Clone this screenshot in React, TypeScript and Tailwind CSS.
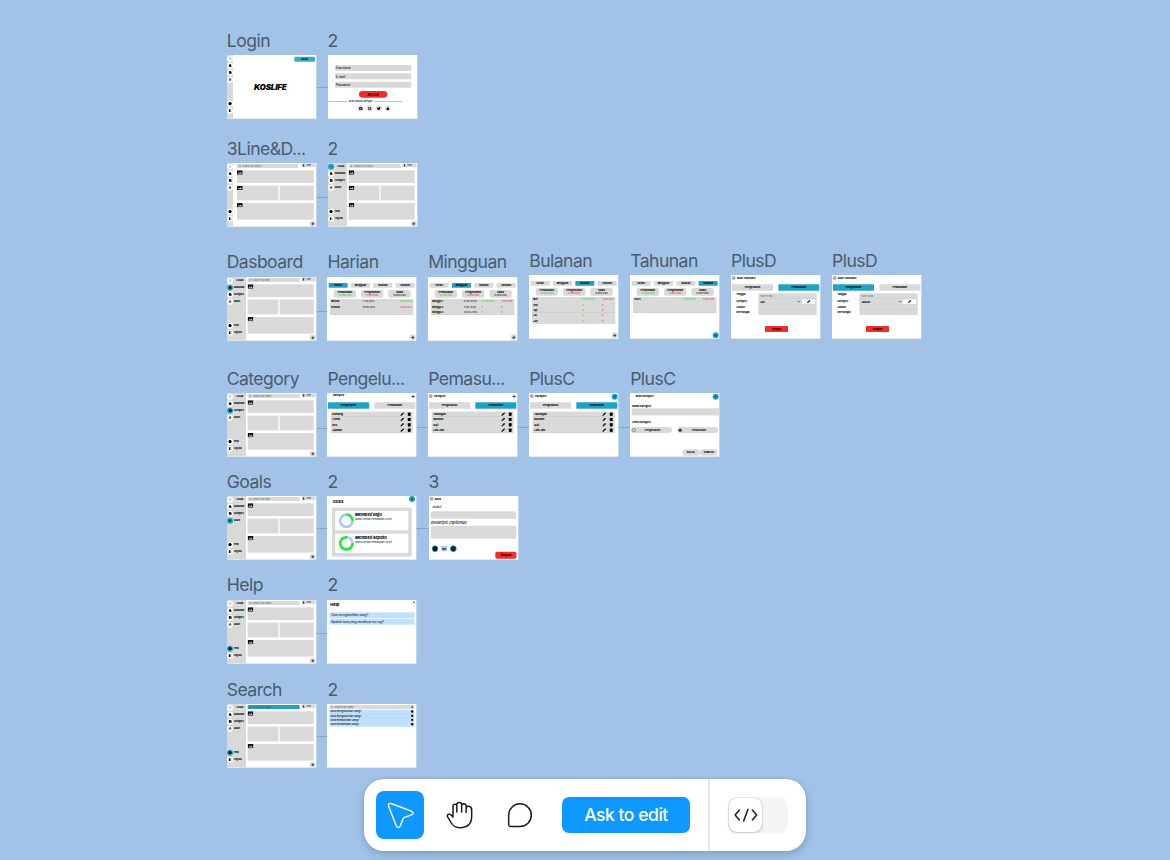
import type { ReactNode } from "react";
import clsx from "clsx";
import {
  ArrowLeft, Check, ChevronDown, Goal, House, Menu, Minus,
  Pencil, Plus, Search, Trash2, User, Wallet, X, CircleHelp,
} from "lucide-react";
import { FaApple, FaFacebook, FaGoogle, FaTwitter } from "react-icons/fa";

/* ---------- canvas primitives ---------- */

// Artboards are authored at 3x and shown at one third of their size.
function Artboard({ at, title, high = false, children }: { at: string; title: string; high?: boolean; children: ReactNode }) {
  return (
    <section className={clsx("absolute flex w-[90px] flex-col gap-[3px]", at)}>
      <h2 className={clsx("h-6 text-[17.6px] leading-6 tracking-[-0.55px] whitespace-nowrap text-[#4a5c70]", !high && "pt-px")}>{title}</h2>
      <div className="h-[64px]">
        <div className="flex h-[191px] w-[268px] origin-top-left scale-[0.33333] flex-col overflow-hidden bg-white text-[8px] leading-none text-black">
          {children}
        </div>
      </div>
    </section>
  );
}

function Link({ at }: { at: string }) {
  return <div className={clsx("absolute h-px bg-[#84a2c5]", at)} />;
}

/* ---------- shared pieces ---------- */

function AddButton({ teal = false }: { teal?: boolean }) {
  return (
    <div className={clsx("flex size-[18px] shrink-0 items-center justify-center rounded-full", teal ? "bg-[#22a2c2]" : "bg-[#d9d9d9]")}>
      <Plus size={11} strokeWidth={4} className={teal ? "text-[#0b3c4a]" : "text-black"} />
    </div>
  );
}

function Back() {
  return (
    <div className="flex size-[10px] shrink-0 items-center justify-center rounded-full border border-black">
      <ArrowLeft size={7} strokeWidth={3} />
    </div>
  );
}

function ExitIcon() {
  return (
    <svg viewBox="0 0 10 10" className="size-[10px]">
      <rect x="1.500" y="1" width="4.500" height="8" fill="black" />
      <path d="M6 1.500 H8.500 V8.500 H6" fill="none" stroke="black" strokeWidth="0.8" />
    </svg>
  );
}

function PictureIcon() {
  return (
    <svg viewBox="0 0 17 13" className="h-[13px] w-[17px]">
      <rect width="17" height="13" fill="black" />
      <path d="M2 10.500 L6 6 L8.500 8.500 L11.500 5 L15.500 10.500 Z" fill="#d9d9d9" />
      <path d="M2 3 H15" stroke="#777" strokeWidth="1" />
    </svg>
  );
}

function NavItem({ icon, label, active, first, wide }: { icon: ReactNode; label: string; active: boolean; first?: boolean; wide: boolean }) {
  return (
    <div className="flex h-[21px] items-center gap-[2px]">
      <div className={clsx("flex size-[18px] shrink-0 items-center justify-center rounded-full", active ? "bg-[#22a2c2]" : "bg-white")}>{icon}</div>
      {wide && <span className={clsx("text-[7px] font-extrabold tracking-[-0.2px] whitespace-nowrap", first && "pl-2")}>{label}</span>}
    </div>
  );
}

function Sidebar({ wide, active }: { wide: boolean; active?: string }) {
  const items: [string, ReactNode][] = [
    ["LOGIN", <Menu size={9} strokeWidth={2} className="text-gray-600" />],
    ["Dasboard", <House size={9} strokeWidth={4} fill="black" />],
    ["Category", <Wallet size={9} strokeWidth={4} fill="black" />],
    ["Goals", <Goal size={10} strokeWidth={2.5} />],
  ];
  return (
    <nav className={clsx("flex shrink-0 flex-col bg-[#d9d9d9]", wide ? "w-[57px]" : "w-[18px]")}>
      {items.map(([label, icon], i) => (
        <NavItem key={label} label={label} icon={icon} wide={wide} first={i === 0} active={active === label} />
      ))}
      <div className="h-[51px]" />
      <NavItem label="Help" icon={<CircleHelp size={10} strokeWidth={5} fill="black" />} wide={wide} active={active === "Help"} />
      <NavItem label="Log out" icon={<ExitIcon />} wide={wide} active={false} />
    </nav>
  );
}

function Block({ size, picture = false }: { size: string; picture?: boolean }) {
  return <div className={clsx("bg-[#d9d9d9]", size)}>{picture && <PictureIcon />}</div>;
}

function Dashboard({ wide = true, active, tealSearch = false, line = false, hint = "Search by date" }: { wide?: boolean; active?: string; tealSearch?: boolean; line?: boolean; hint?: string }) {
  return (
    <div className="flex flex-1">
      <Sidebar wide={wide} active={active} />
      <main className={clsx("flex flex-1 flex-col pr-[8px]", wide ? "pl-[5px]" : "pl-[12px]")}>
        <div className="flex h-[22px] justify-between">
          <div className={clsx("mt-[3px] flex h-[12px] items-center gap-1 rounded-[2px] px-1 text-[7px] text-gray-600 italic", tealSearch ? "bg-[#22a2c2]" : "bg-[#d9d9d9]", wide ? "w-[156px]" : "w-[184px]")}>
            <Search size={8} strokeWidth={2} />
            {hint}
          </div>
          <div className="mt-px -mr-[6px] flex h-[12px] w-[43px] items-center gap-[5px] rounded-[2px] bg-[#d9d9d9] px-[3px] text-[6px]">
            <User size={7} strokeWidth={5} fill="black" />
            User
          </div>
        </div>
        <Block size="h-[38px]" picture />
        <div className="mt-[8px] flex gap-[4px]">
          <Block size={wide ? "h-[44px] w-[92px]" : "h-[44px] w-[124px]"} picture={line} />
          <Block size="h-[44px] flex-1" />
        </div>
        <Block size="mt-[8px] h-[50px]" picture />
        <div className="-mr-[6px] mt-[3px] flex justify-end">
          <AddButton />
        </div>
      </main>
    </div>
  );
}

const TABS = ["Harian", "Mingguan", "Bulanan", "Tahunan"];
const SUMS = [
  ["Pemasukan", "10.000.000", "text-[#21d42b]"],
  ["Pengeluaran", "4.000.000", "text-[#f02d2d]"],
  ["Saldo", "6.000.000", "text-black"],
];

type Entry = { name?: string; date?: string; income?: string; spend?: string; gain?: string };

function Report({ tab, rows, teal = false }: { tab: string; rows: Entry[]; teal?: boolean }) {
  return (
    <>
      <div className="mt-[18px] flex justify-between px-[5px]">
        {TABS.map((t) => (
          <div key={t} className={clsx("flex h-[14px] w-[57px] items-center justify-center rounded-[1px] text-[7px] font-extrabold", t === tab ? "bg-[#22a2c2]" : "bg-[#d9d9d9]")}>{t}</div>
        ))}
      </div>
      <div className="mt-[7px] flex justify-between pr-[17px] pl-[20px]">
        {SUMS.map(([name, value, color]) => (
          <div key={name} className="flex h-[23px] w-[67px] flex-col items-center justify-center gap-[1px] rounded-[6px] bg-[#d9d9d9] text-[7.5px]">
            <span className="font-extrabold">{name}</span>
            <span className={color}>{value}</span>
          </div>
        ))}
      </div>
      <div className="mt-[4px] mr-[9px] ml-[9px] flex flex-col">
        {rows.map((r, i) => (
          <div key={i} className="flex h-[16px] items-center border-b border-[#c3c3c3] bg-[#d9d9d9] pl-1 text-[7px] whitespace-nowrap">
            <span className="w-[94px] font-extrabold">{r.name}</span>
            <span className="w-[53px]">{r.date}</span>
            <span className="w-[59px] text-[#21d42b]">{r.income}</span>
            <span className={r.gain ? "text-[#21d42b]" : "text-[#f02d2d]"}>{r.gain ?? r.spend}</span>
          </div>
        ))}
      </div>
      <div className="mt-auto flex justify-end pr-[2px] pb-[1px]">
        <AddButton teal={teal} />
      </div>
    </>
  );
}

function TypeTabs({ active }: { active: 0 | 1 }) {
  return (
    <div className="flex justify-between px-[3px]">
      {["Pengeluaran", "Pemasukan"].map((t, i) => (
        <div key={t} className={clsx("flex h-[19px] w-[123px] items-center justify-center rounded-[1px] text-[7.5px] font-extrabold", i === active ? "bg-[#22a2c2]" : "bg-[#d9d9d9]")}>{t}</div>
      ))}
    </div>
  );
}

function NewTransaction({ active, category }: { active: 0 | 1; category: string }) {
  return (
    <>
      <div className="flex h-[28px] items-start gap-[5px] pt-[4px] pl-[3px]">
        <Back />
        <span className="pt-px text-[7.5px] font-extrabold">Buat Transaksi</span>
      </div>
      <TypeTabs active={active} />
      <div className="mt-[8px] flex pr-[11px] pl-[16px]">
        <div className="flex w-[66px] flex-col text-[7px] font-extrabold">
          <span className="h-[21px]">Tanggal</span>
          <span className="h-[16px]">Category</span>
          <span className="h-[16px]">Jumlah</span>
          <span className="h-[12px]">Keterangan</span>
        </div>
        <div className="flex flex-1 flex-col bg-[#d9d9d9] text-[7px]">
          <div className="flex h-[17px] items-center border-b border-[#c6c6c6] pl-[6px] text-gray-700">10.07.2.PM</div>
          <div className="flex h-[16px] items-center pl-[6px]">
            <span className="font-bold">{category}</span>
            <ChevronDown size={12} strokeWidth={3} className="mr-[3px] ml-auto" />
            <div className="mr-[5px] flex h-[15px] w-[39px] items-center justify-center bg-white">
              <Pencil size={10} strokeWidth={3} fill="black" />
            </div>
          </div>
          <div className="h-[16px] border-y border-[#c6c6c6]" />
          <div className="h-[16px]" />
        </div>
      </div>
      <div className="mt-[33px] ml-[102px] flex h-[18px] w-[69px] items-center justify-center rounded-[2px] bg-[#f02d2d] text-[7.5px] font-extrabold">Simpan</div>
    </>
  );
}

function CategoryList({ active, names, back = false, teal = false }: { active: 0 | 1; names: string[]; back?: boolean; teal?: boolean }) {
  return (
    <>
      <div className="flex h-[28px] items-start justify-between pr-[2px] pl-[3px]">
        <div className={clsx("flex items-center gap-[5px] pt-[4px]", !back && "pl-[14px]")}>
          {back && <Back />}
          <span className="text-[7.5px] font-extrabold italic">Category</span>
        </div>
        <div className="pt-[2px]">
          {teal ? <AddButton teal /> : <Plus size={13} strokeWidth={3.5} className="mt-[2px] mr-[1px]" />}
        </div>
      </div>
      <TypeTabs active={active} />
      <div className="mx-[11px] mt-[9px] flex flex-col">
        {names.map((n) => (
          <div key={n} className="flex h-[16px] items-center border-b border-[#c3c3c3] bg-[#d9d9d9] pr-[5px] pl-[5px] text-[7.5px] font-extrabold">
            {n}
            <Pencil size={11} strokeWidth={3} fill="black" className="mr-[10px] ml-auto" />
            <Trash2 size={11} strokeWidth={4} fill="black" />
          </div>
        ))}
      </div>
    </>
  );
}

function NewCategory() {
  return (
    <>
      <div className="flex h-[35px] justify-between pt-[2px] pr-[2px] pl-[17px]">
        <span className="pt-[3px] text-[7.5px] font-extrabold italic">Buat Category</span>
        <AddButton teal />
      </div>
      <span className="h-[11px] pl-[6px] text-[7.5px] font-extrabold">Nama Category</span>
      <div className="ml-[5px] h-[21px] bg-[#d9d9d9]" />
      <span className="mt-[17px] h-[18px] pl-[6px] text-[7.5px] font-extrabold">Jenis Category</span>
      <div className="flex justify-between px-[3px]">
        {["Pengeluaran", "Pemasukan"].map((t, i) => (
          <div key={t} className="flex h-[18px] w-[123px] items-center rounded-full bg-[#d9d9d9] pl-[3px] text-[7.5px] font-bold">
            <div className={clsx("size-[11px] rounded-full", i === 1 ? "border-2 border-gray-500 bg-gray-800" : "border border-black")} />
            <span className="flex-1 pr-2 text-center">{t}</span>
          </div>
        ))}
      </div>
      <div className="mt-[49px] mr-[5px] flex justify-end text-[7.5px] font-extrabold">
        <div className="flex h-[19px] w-[53px] items-center justify-center rounded-full bg-[#d9d9d9]">BATAL</div>
        <div className="flex h-[19px] w-[53px] items-center justify-center rounded-full bg-[#d9d9d9]">SIMPAN</div>
      </div>
    </>
  );
}

function GoalCard({ title, sub, done }: { title: string; sub: string; done: number }) {
  const c = 2 * Math.PI * 18.5;
  return (
    <div className="flex h-[58px] bg-white pl-[10px]">
      <svg viewBox="0 0 46 46" className="mt-[6px] size-[46px] shrink-0 -rotate-90">
        <circle cx="23" cy="23" r="18.5" fill="none" stroke="#9dccf8" strokeWidth="7.5" />
        <circle cx="23" cy="23" r="18.5" fill="none" stroke="#16f02c" strokeWidth="7.5" strokeDasharray={`${c * done} ${c}`} transform={done > 0.5 ? "rotate(90 23 23)" : undefined} />
      </svg>
      <div className="flex flex-col gap-[4px] pt-[5px] pl-[3px] whitespace-nowrap italic">
        <span className="text-[12px] font-extrabold">{title}</span>
        <span className="text-[7.2px]">{sub}</span>
      </div>
    </div>
  );
}

/* ---------- toolbar ---------- */

function Toolbar() {
  return (
    <div className="absolute top-[779px] left-[364px] flex h-[72px] w-[442px] items-center rounded-[20px] bg-white pl-3 shadow-[0_3px_9px_rgba(20,40,80,0.24),0_0_2px_rgba(20,40,80,0.16)]">
      <button className="size-12 rounded-lg bg-[#0d99ff]">
        <svg viewBox="0 0 144 144" className="size-12" fill="none" stroke="white" strokeWidth="4.2" strokeLinejoin="round">
          <path d="M45 37.5 L106 60.5 Q116 66 106.5 71.5 L86 79 Q82 80.500 80.500 84.500 L73 104.500 Q67 115 60.500 104.500 L38 45.500 Q36 35.500 45 37.500 Z" />
        </svg>
      </button>
      <button className="ml-3 size-12">
        <svg viewBox="0 0 144 144" className="size-12" fill="none" stroke="#1b1b1b" strokeWidth="4.5" strokeLinecap="round" strokeLinejoin="round">
          <path d="M51 76 V45.500 Q51 39.500 57 39.500 Q62.500 39.500 62.500 45.500 V63 M62.500 44 V40.500 Q63 34.500 69.500 34.500 Q77 34.500 77 40.500 V63 M77 42 Q78 38.500 83 38.500 Q90.500 39 90.500 46.500 V64 M90.500 49 Q92 45.500 98 46 Q107 47 107 56 V76 Q107 110 72 110 Q54 110 46 96 L34 76 Q33.500 69 41 70 Q46 71 51 78" />
        </svg>
      </button>
      <button className="ml-3 size-12">
        <svg viewBox="0 0 144 144" className="size-12" fill="none" stroke="#1b1b1b" strokeWidth="4.5" strokeLinejoin="round">
          <path d="M38 72 A34 34 0 1 1 72 106.500 H44 Q38 106.500 38 100.500 Z" />
        </svg>
      </button>
      <button className="ml-[18px] h-9 w-32 rounded-[7px] bg-[#0d99ff] text-[17.5px] font-medium tracking-[-0.45px] whitespace-nowrap text-white">Ask to edit</button>
      <div className="ml-[18px] h-full w-[2px] bg-[#e6e6e6]" />
      <div className="ml-[18px] flex h-9 w-[60px] items-center rounded-[9px] bg-[#f5f5f5] pl-px">
        <div className="flex h-[34px] w-[33px] items-center justify-center rounded-[8px] bg-white shadow-[0_0_1px_rgba(0,0,0,0.35),0_1px_3px_rgba(0,0,0,0.18)]">
          <svg viewBox="0 0 72 48" className="h-4 w-6" fill="none" stroke="#1b1b1b" strokeWidth="4.5" strokeLinecap="round" strokeLinejoin="round">
            <path d="M16 9 L3.500 24 L16 39 M42 7 L29 42 M55 9 L68 24 L55 39" />
          </svg>
        </div>
      </div>
    </div>
  );
}

/* ---------- page ---------- */

export default function App() {
  return (
    <div className="relative h-[860px] w-[1170px] overflow-hidden bg-[#a2c3e7] font-['Inter','Liberation_Sans',sans-serif]">
      <Link at="left-[316px] top-[87px] w-[12px]" />
      <Link at="left-[316px] top-[197px] w-[12px]" />
      <Link at="left-[316px] top-[311px] w-[12px]" />
      <Link at="left-[427px] top-[308px] w-[2px]" />
      <Link at="left-[528px] top-[308px] w-[2px]" />
      <Link at="left-[629px] top-[308px] w-[2px]" />
      <Link at="left-[730px] top-[308px] w-[2px]" />
      <Link at="left-[831px] top-[308px] w-[2px]" />
      <Link at="left-[316px] top-[428px] w-[12px]" />
      <Link at="left-[417px] top-[427px] w-[214px]" />
      <Link at="left-[316px] top-[528px] w-[113px]" />
      <Link at="left-[316px] top-[633px] w-[12px]" />
      <Link at="left-[316px] top-[736px] w-[12px]" />

      <Artboard at="left-[226.8px] top-[28.3px]" title="Login">
        <div className="flex flex-1">
          <Sidebar wide={false} />
          <div className="flex flex-1 flex-col">
            <div className="mt-[5px] mr-[4px] flex h-[15px] w-[62px] items-center justify-center self-end rounded-[4px] bg-[#3aaac8] text-[7.5px] font-bold italic">Mulai</div>
            <div className="mt-[63px] pl-[63px] text-[24.5px] font-black tracking-[-0.8px] italic">KOSLIFE</div>
          </div>
        </div>
      </Artboard>

      <Artboard at="left-[327.6px] top-[28.3px]" title="2">
        <div className="mt-[30px] flex flex-col gap-[7px] pr-[18px] pl-[21px]">
          {["Username", "E-mail", "Password"].map((t) => (
            <div key={t} className="flex h-[18px] items-center rounded-[4px] bg-[#d9d9d9] pl-[3px] text-[9px] font-medium italic">{t}</div>
          ))}
        </div>
        <div className="mt-[10px] ml-[93px] flex h-[20px] w-[85px] items-center justify-center rounded-full bg-[#f02d2d] text-[9px] font-semibold italic">MASUK</div>
        <div className="mt-[5px] flex h-[12px] items-center">
          <div className="h-[1.5px] w-[58px] bg-gray-400" />
          <div className="w-[81px] text-center text-[7.5px] font-medium whitespace-nowrap">atau masuk dengan</div>
          <div className="h-[1.5px] w-[83px] bg-gray-400" />
        </div>
        <div className="mt-[6px] ml-[89px] flex gap-[9px]">
          {[FaFacebook, FaGoogle, FaTwitter, FaApple].map((Icon, i) => (
            <div key={i} className="flex size-[18px] items-center justify-center rounded-full bg-[#dedede]">
              <Icon size={11} />
            </div>
          ))}
        </div>
      </Artboard>

      <Artboard at="left-[226.8px] top-[136px]" title="3Line&D...">
        <Dashboard wide={false} line hint="Search by history" />
      </Artboard>
      <Artboard at="left-[327.6px] top-[136px]" title="2">
        <Dashboard active="LOGIN" line hint="Search by history" />
      </Artboard>

      <Artboard high at="left-[226.7px] top-[250px]" title="Dasboard">
        <Dashboard active="Dasboard" />
      </Artboard>
      <Artboard high at="left-[327.4px] top-[250px]" title="Harian">
        <Report tab="Harian" rows={[
          { name: "Minum", date: "11.08.2024", gain: "10.000.000" },
          { name: "Belanja", date: "07.08.2024", spend: "4.000.000" },
          {},
        ]} />
      </Artboard>
      <Artboard high at="left-[428.2px] top-[250px]" title="Mingguan">
        <Report tab="Mingguan" rows={[
          { name: "Minggu 1", date: "01.08-07.08", income: "10.000.000", spend: "4.000.000" },
          { name: "Minggu 2", date: "11.08-18.08", income: "0", spend: "0" },
          { name: "Minggu 3", date: "20.08-27.08", income: "0", spend: "0" },
        ]} />
      </Artboard>
      <Artboard at="left-[529.2px] top-[248.3px]" title="Bulanan">
        <Report tab="Bulanan" rows={[
          { name: "Mei", income: "10.000.000", spend: "4.000.000" },
          { name: "Sep", income: "0", spend: "0" },
          { name: "Agt", income: "0", spend: "0" },
          { name: "Jul", income: "0", spend: "0" },
          { name: "Jun", income: "0", spend: "0" },
        ]} />
      </Artboard>
      <Artboard at="left-[630.2px] top-[248.3px]" title="Tahunan">
        <Report tab="Tahunan" teal rows={[{ name: "2024", income: "10.000.000", spend: "4.000.000" }, {}, {}]} />
      </Artboard>
      <Artboard at="left-[731px] top-[248.3px]" title="PlusD">
        <NewTransaction active={1} category="Gaji" />
      </Artboard>
      <Artboard at="left-[832px] top-[248.3px]" title="PlusD">
        <NewTransaction active={0} category="Jajanan" />
      </Artboard>

      <Artboard at="left-[226.7px] top-[366px]" title="Category">
        <Dashboard active="Category" hint="Search by name" />
      </Artboard>
      <Artboard at="left-[327.4px] top-[366px]" title="Pengelu...">
        <CategoryList active={0} names={["Kantong", "Listrik", "Kos", "Jajanan"]} />
      </Artboard>
      <Artboard at="left-[428.2px] top-[366px]" title="Pemasu...">
        <CategoryList active={1} back names={["Tabungan", "Bulanan", "Gaji", "Lain-lain"]} />
      </Artboard>
      <Artboard at="left-[529.2px] top-[366px]" title="PlusC">
        <CategoryList active={1} back teal names={["Tabungan", "Bulanan", "Gaji", "Lain-lain"]} />
      </Artboard>
      <Artboard at="left-[630.2px] top-[366px]" title="PlusC">
        <NewCategory />
      </Artboard>

      <Artboard at="left-[226.7px] top-[469.3px]" title="Goals">
        <Dashboard active="Goals" />
      </Artboard>
      <Artboard at="left-[327.4px] top-[469.3px]" title="2">
        <div className="flex h-[35px] justify-between pr-[4px] pl-[17px]">
          <span className="pt-[11px] text-[11.5px] font-bold">Goals</span>
          <AddButton teal />
        </div>
        <div className="mr-[14px] ml-[15px] flex h-[147px] flex-col gap-[10px] bg-[#d9d9d9] p-[10px]">
          <GoalCard title="Membeli baju" sub="Waktu tersisa Pemasukan 2jt/5jt" done={0.25} />
          <GoalCard title="Membeli sepatu" sub="Waktu tersisa Pemasukan 4jt/5jt" done={0.75} />
        </div>
      </Artboard>
      <Artboard at="left-[428.6px] top-[469.3px]" title="3">
        <div className="flex items-center gap-[4px] pt-[3px] pl-[3px] text-[8px] font-bold">
          <Back />
          Back
        </div>
        <span className="mt-[15px] pl-[9px] text-[10.5px] leading-[12px] font-medium italic">Judul</span>
        <div className="mt-[6px] mr-[6px] ml-[6px] h-[22px] rounded-[5px] bg-[#d9d9d9]" />
        <span className="mt-[5px] pl-[6px] text-[11.5px] leading-[12px] font-medium tracking-[-0.1px] italic">Deskripsi (Optional)</span>
        <div className="mt-[4px] mr-[6px] ml-[6px] h-[39px] rounded-[5px] bg-[#d9d9d9]" />
        <div className="mt-[20px] ml-[8px] flex h-[20px] items-center gap-[9px]">
          <div className="flex size-[20px] items-center justify-center rounded-full border-[3px] border-[#22a2c2] bg-black text-[#22a2c2]"><Minus size={8} strokeWidth={4} /></div>
          <div className="flex h-[16px] w-[17px] items-center justify-center rounded-[3px] bg-[#a9cdf3] text-[8px] font-extrabold">00</div>
          <div className="flex size-[20px] items-center justify-center rounded-full border-[3px] border-[#22a2c2] bg-black text-[#22a2c2]"><Plus size={8} strokeWidth={4} /></div>
        </div>
        <div className="mt-[-1px] mr-[6px] flex h-[21px] w-[63px] items-center justify-center self-end rounded-[5px] bg-[#f02d2d] text-[9px] font-bold italic">Simpan</div>
      </Artboard>

      <Artboard high at="left-[226.7px] top-[573px]" title="Help">
        <Dashboard active="Help" hint="Search by name" />
      </Artboard>
      <Artboard high at="left-[327.4px] top-[573px]" title="2">
        <div className="flex h-[37px] justify-between pt-[3px] pr-[3px] pl-[10px]">
          <span className="pt-[5px] text-[12px] font-extrabold">Help</span>
          <X size={8} strokeWidth={5} />
        </div>
        <div className="mr-[6px] ml-[8px] flex flex-col gap-[2px] text-[9px] whitespace-nowrap italic">
          <div className="flex h-[17px] items-center bg-[#bfe0ff] pl-[4px]">Cara menghasilkan uang?</div>
          <div className="flex h-[18px] items-center bg-[#bfe0ff] pl-[4px]">Apakah saja yang membuat mu rugi?</div>
        </div>
      </Artboard>

      <Artboard at="left-[226.7px] top-[677.3px]" title="Search">
        <Dashboard active="Help" tealSearch hint="Search by name" />
      </Artboard>
      <Artboard at="left-[327.4px] top-[677.3px]" title="2">
        <div className="mt-[3px] mr-[6px] mb-[2px] ml-[8px] flex h-[12px] items-center gap-1 bg-[#d9d9d9] px-[2px] text-[7.5px] text-gray-600 italic">
          <Search size={8} />
          Search by name
          <X size={8} strokeWidth={5} className="ml-auto text-black" />
        </div>
        <div className="mr-[6px] ml-[8px] flex flex-col text-[7.5px] font-medium italic">
          {["Cara menghasilkan uang?", "Cara menghasilkan uang?", "Cara membelikan uang?", "Cara membelikan uang?"].map((t, i) => (
            <div key={i} className="flex h-[12.5px] items-center justify-between border-b border-[#a9cdf3] bg-[#bfe0ff] pr-[3px] pl-[1px]">
              {t}
              <div className="flex size-[7px] items-center justify-center rounded-full bg-black"><Check size={3} /></div>
            </div>
          ))}
        </div>
      </Artboard>

      <Toolbar />
    </div>
  );
}
